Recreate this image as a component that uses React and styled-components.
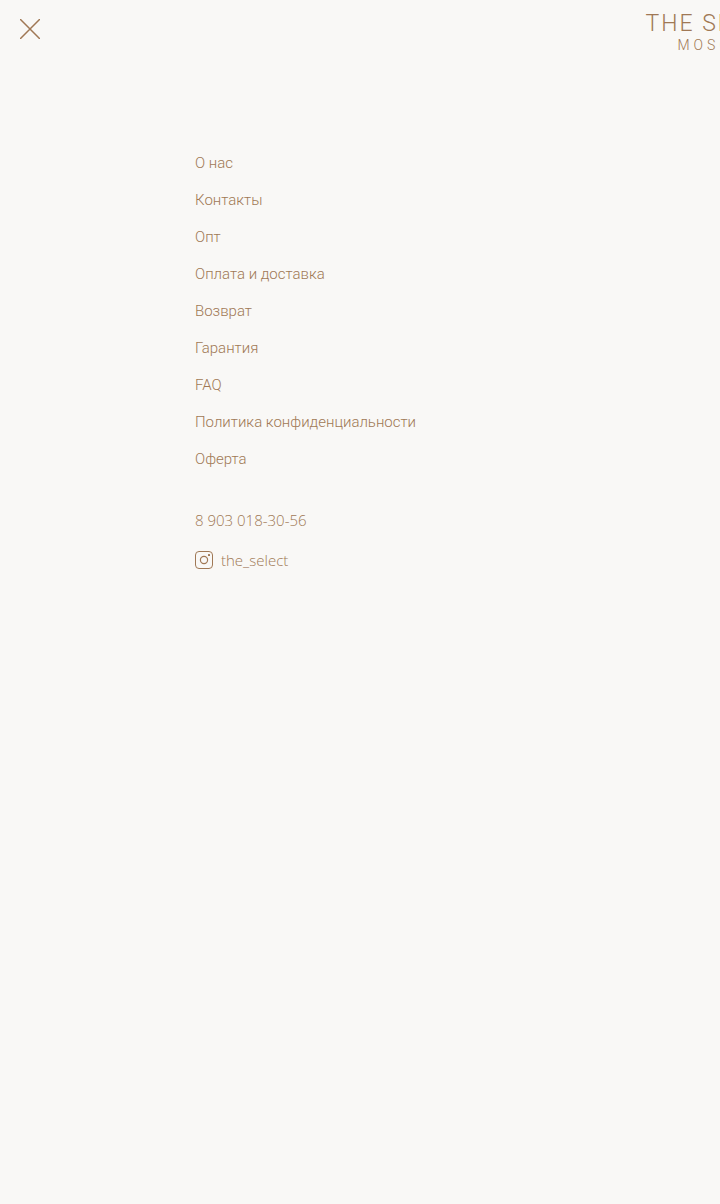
import React from "react";
import styled, { createGlobalStyle } from "styled-components";

const GlobalStyle = createGlobalStyle`
  *, *::before, *::after { box-sizing: border-box; }
  body {
    margin: 0;
    background: #f9f8f6;
    color: #a07855;
    font-family: Roboto, "Liberation Sans", sans-serif;
    font-weight: 300;
  }
`;

const Page = styled.div`
  min-height: 100vh;
  overflow: hidden;
`;

const Header = styled.header`
  display: flex;
  justify-content: space-between;
  height: 60px;
  padding: 12px 0 0 20px;
`;

const CloseButton = styled.button`
  display: flex;
  align-items: center;
  justify-content: center;
  width: 20px;
  height: 34px;
  padding: 0;
  border: 0;
  background: none;
  color: inherit;
  cursor: pointer;
`;

/* Zero-width column: the logo is centred on the right edge of the panel. */
const LogoAnchor = styled.div`
  display: flex;
  justify-content: center;
  width: 0;
`;

const Logo = styled.a`
  display: flex;
  flex: none;
  flex-direction: column;
  align-items: center;
  color: inherit;
  text-decoration: none;
  white-space: nowrap;
`;

const LogoName = styled.span`
  font-size: 23px;
  line-height: 24px;
  letter-spacing: 2px;
`;

const LogoCity = styled.span`
  font-size: 14px;
  line-height: 18px;
  letter-spacing: 4px;
`;

const Content = styled.main`
  display: flex;
  flex-direction: column;
  gap: 43px;
  padding: 94px 20px 40px 195px;
`;

const Menu = styled.ul`
  display: flex;
  flex-direction: column;
  gap: 19px;
  margin: 0;
  padding: 0;
  list-style: none;
`;

const MenuLink = styled.a`
  display: block;
  color: inherit;
  font-size: 15px;
  line-height: 18px;
  text-decoration: none;
`;

const Contacts = styled.address`
  display: flex;
  flex-direction: column;
  align-items: flex-start;
  gap: 22px;
  font-style: normal;
`;

const ContactLink = styled.a`
  display: flex;
  align-items: center;
  gap: 8px;
  color: inherit;
  font-family: "Open Sans", "Noto Sans", sans-serif;
  font-size: 15px;
  line-height: 18px;
  text-decoration: none;
`;

const pages = [
  "О нас",
  "Контакты",
  "Опт",
  "Оплата и доставка",
  "Возврат",
  "Гарантия",
  "FAQ",
  "Политика конфиденциальности",
  "Оферта",
];

function CloseIcon() {
  return (
    <svg width="20" height="20" viewBox="0 0 20 20" fill="none" stroke="currentColor" strokeWidth="1.5" aria-hidden="true">
      <path d="M0.5 0.5 19.5 19.5M19.5 0.5 0.5 19.5" strokeLinecap="round" />
    </svg>
  );
}

function InstagramIcon() {
  return (
    <svg width="18" height="18" viewBox="0 0 18 18" fill="none" stroke="currentColor" aria-hidden="true">
      <rect x="0.5" y="0.5" width="17" height="17" rx="3.5" />
      <circle cx="9" cy="9" r="3.6" strokeWidth="1.2" />
      <rect x="13" y="3" width="2" height="2" rx="0.5" fill="currentColor" stroke="none" />
    </svg>
  );
}

export default function App() {
  return (
    <Page>
      <GlobalStyle />
      <Header>
        <CloseButton type="button" aria-label="Закрыть меню">
          <CloseIcon />
        </CloseButton>
        <LogoAnchor>
          <Logo href="#">
            <LogoName>THE SELECT</LogoName>
            <LogoCity>MOSCOW</LogoCity>
          </Logo>
        </LogoAnchor>
      </Header>
      <Content>
        <nav aria-label="Меню">
          <Menu>
            {pages.map((title) => (
              <li key={title}>
                <MenuLink href="#">{title}</MenuLink>
              </li>
            ))}
          </Menu>
        </nav>
        <Contacts>
          <ContactLink href="tel:+79030183056">8 903 018-30-56</ContactLink>
          <ContactLink href="#">
            <InstagramIcon />
            the_select
          </ContactLink>
        </Contacts>
      </Content>
    </Page>
  );
}
